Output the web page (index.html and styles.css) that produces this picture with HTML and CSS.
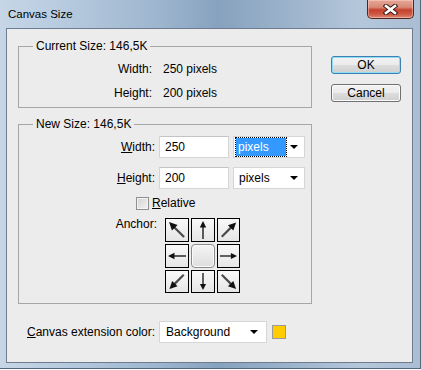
FILE: index.html
```html
<!DOCTYPE html>
<html>
<head>
<meta charset="utf-8">
<link rel="stylesheet" href="styles.css">
</head>
<body>
<div class="window">
  <div class="titlebar">
    <span class="title">Canvas Size</span>
    <div class="close">
      <svg width="15" height="11" viewBox="0 0 15 11">
        <path d="M3 2 L12 9 M12 2 L3 9" stroke="#3b1c16" stroke-width="4.6" stroke-linecap="square"/>
        <path d="M3 2 L12 9 M12 2 L3 9" stroke="#ffffff" stroke-width="2.6" stroke-linecap="square"/>
      </svg>
    </div>
  </div>
  <div class="client">
    <div class="main">
      <div class="groups">
        <fieldset class="group">
          <legend>Current Size: 146,5K</legend>
          <div class="info">
            <span class="lbl">Width:</span><span>250 pixels</span>
            <span class="lbl">Height:</span><span>200 pixels</span>
          </div>
        </fieldset>
        <fieldset class="group new">
          <legend>New Size: 146,5K</legend>
          <div class="fields">
            <span class="lbl"><u>W</u>idth:</span>
            <div class="input">250</div>
            <div class="select focused"><span class="sel-text">pixels</span><span class="arrow"></span></div>
            <span class="lbl"><u>H</u>eight:</span>
            <div class="input">200</div>
            <div class="select"><span class="sel-text">pixels</span><span class="arrow"></span></div>
          </div>
          <div class="check-row"><span class="checkbox"></span><span><u>R</u>elative</span></div>
          <div class="anchor-row">
            <span class="anchor-lbl">Anchor:</span>
            <div class="anchor-grid">
              <div class="cell"><svg viewBox="0 0 22 22"><g transform="translate(11 11) rotate(-135) scale(1.25) translate(-11 -11)"><line x1="3" y1="11" x2="15" y2="11" class="shaft"/><polygon points="20,11 13.5,7.8 13.5,14.2" class="head"/></g></svg></div>
              <div class="cell"><svg viewBox="0 0 22 22"><g transform="rotate(-90 11 11)"><line x1="2" y1="11" x2="15" y2="11" class="shaft"/><polygon points="20,11 13.5,7.8 13.5,14.2" class="head"/></g></svg></div>
              <div class="cell"><svg viewBox="0 0 22 22"><g transform="translate(11 11) rotate(-45) scale(1.25) translate(-11 -11)"><line x1="3" y1="11" x2="15" y2="11" class="shaft"/><polygon points="20,11 13.5,7.8 13.5,14.2" class="head"/></g></svg></div>
              <div class="cell"><svg viewBox="0 0 22 22"><g transform="rotate(180 11 11)"><line x1="2" y1="11" x2="15" y2="11" class="shaft"/><polygon points="20,11 13.5,7.8 13.5,14.2" class="head"/></g></svg></div>
              <div class="center"></div>
              <div class="cell"><svg viewBox="0 0 22 22"><g><line x1="2" y1="11" x2="15" y2="11" class="shaft"/><polygon points="20,11 13.5,7.8 13.5,14.2" class="head"/></g></svg></div>
              <div class="cell"><svg viewBox="0 0 22 22"><g transform="translate(11 11) rotate(135) scale(1.25) translate(-11 -11)"><line x1="3" y1="11" x2="15" y2="11" class="shaft"/><polygon points="20,11 13.5,7.8 13.5,14.2" class="head"/></g></svg></div>
              <div class="cell"><svg viewBox="0 0 22 22"><g transform="rotate(90 11 11)"><line x1="2" y1="11" x2="15" y2="11" class="shaft"/><polygon points="20,11 13.5,7.8 13.5,14.2" class="head"/></g></svg></div>
              <div class="cell"><svg viewBox="0 0 22 22"><g transform="translate(11 11) rotate(45) scale(1.25) translate(-11 -11)"><line x1="3" y1="11" x2="15" y2="11" class="shaft"/><polygon points="20,11 13.5,7.8 13.5,14.2" class="head"/></g></svg></div>
            </div>
          </div>
        </fieldset>
      </div>
      <div class="buttons">
        <div class="btn default">OK</div>
        <div class="btn">Cancel</div>
      </div>
    </div>
    <div class="ext-row">
      <span class="ext-lbl"><u>C</u>anvas extension color:</span>
      <div class="select ext"><span class="sel-text">Background</span><span class="arrow"></span></div>
      <span class="swatch"></span>
    </div>
  </div>
</div>
</body>
</html>
```

FILE: styles.css
```css
* { box-sizing: border-box; }
html, body { margin: 0; padding: 0; background: #ffffff; }
body {
  font-family: "Liberation Sans", Arial, sans-serif;
  font-size: 12px;
  color: #000;
}
.window {
  width: 421px;
  height: 369px;
  display: flex;
  flex-direction: column;
  padding: 0 7px 5px 6px;
  border-right: 1px solid #55677d;
  border-bottom: 1px solid #55677d;
  background: linear-gradient(90deg, #c6d6e7 0%, #b4c8dd 18%, #9db5ce 38%, #87a2bf 52%, #9bb2ca 68%, #b5c7db 86%, #aabdd3 100%);
}
.titlebar {
  height: 28px;
  display: flex;
  align-items: flex-start;
  flex: none;
}
.title {
  margin-left: 2px;
  margin-top: 6px;
  font-size: 11.5px;
  line-height: 16px;
  color: #000;
}
.close {
  margin-left: auto;
  margin-right: -1px;
  width: 47px;
  height: 19px;
  border: 1px solid #54251c;
  border-top: none;
  border-radius: 0 0 5px 5px;
  background: linear-gradient(180deg, #e6a696 0%, #d98a78 40%, #c5412c 55%, #cd5a45 80%, #db8c78 100%);
  box-shadow: inset 0 0 0 1px rgba(255,220,210,0.45);
  display: flex;
  align-items: center;
  justify-content: center;
}
.client {
  flex: 1;
  background: #ececec;
  border: 1px solid #6d7c8e;
  padding: 10px 11px 0 11px;
}
.main {
  display: flex;
}
.groups {
  width: 294px;
  display: flex;
  flex-direction: column;
  gap: 9px;
}
.group {
  margin: 0;
  padding: 0;
  border: 1px solid #a6a6a6;
  min-width: 0;
}
.group legend {
  margin-left: 14px;
  padding: 0 3px;
  line-height: 14px;
}
.info {
  display: grid;
  grid-template-columns: 133px auto;
  column-gap: 11px;
  grid-auto-rows: 24px;
  line-height: 24px;
  padding: 4px 0 2px;
}
.lbl { text-align: right; }
.new { padding-bottom: 10px; }
.fields {
  display: grid;
  grid-template-columns: 136px 70px 72px;
  column-gap: 4px;
  row-gap: 9px;
  align-items: center;
  padding-top: 5px;
}
.input {
  height: 22px;
  background: #fff;
  border: 1px solid #d6d6d6;
  border-top-color: #c4c4c4;
  padding-left: 5px;
  line-height: 20px;
}
.select {
  height: 22px;
  background: #fff;
  border: 1px solid #d6d6d6;
  display: flex;
  align-items: center;
  padding: 0 6px 0 5px;
}
.sel-text { flex: 1; line-height: 18px; }
.select.focused .sel-text {
  flex: none;
  width: 50px;
  margin-left: -3px;
  padding-left: 2px;
  background: #3399ff;
  color: #fff;
  outline: 1px dotted #000;
  outline-offset: 0;
}
.select.focused .arrow { margin-left: auto; }
.arrow {
  width: 0;
  height: 0;
  border-left: 4px solid transparent;
  border-right: 4px solid transparent;
  border-top: 4px solid #000;
  flex: none;
}
.check-row {
  margin-top: 6px;
  height: 16px;
  display: flex;
  align-items: center;
  gap: 3px;
  padding-left: 117px;
}
.checkbox {
  width: 13px;
  height: 13px;
  border: 1px solid #8e8f8f;
  background: linear-gradient(135deg, #d4d4d4 0%, #f2f2f2 100%);
  box-shadow: inset 0 0 0 1px #f4f4f4;
}
.anchor-row {
  margin-top: 7px;
  display: flex;
  align-items: flex-start;
}
.anchor-lbl {
  width: 138px;
  text-align: right;
  line-height: 14px;
  margin-top: -1px;
  margin-right: 8px;
}
.anchor-grid {
  display: grid;
  grid-template-columns: 24px 24px 23px;
  grid-template-rows: 24px 24px 23px;
  gap: 2px;
}
.cell {
  border: 1px solid #000;
  background: linear-gradient(180deg, #f9f9f9 0%, #e6e6e6 100%);
}
.cell svg { display: block; width: 100%; height: 100%; }
.shaft { stroke: #4a4a4a; stroke-width: 1.8; }
.head { fill: #111; }
.center {
  border: 1px solid #8a8a8a;
  border-radius: 4px;
  background: linear-gradient(180deg, #f4f4f4 0%, #dedede 100%);
  box-shadow: inset 0 0 0 1px #fafafa;
}
.buttons {
  margin-left: 19px;
  width: 70px;
  padding-top: 17px;
  display: flex;
  flex-direction: column;
  gap: 10px;
}
.btn {
  height: 18px;
  border: 1px solid #707070;
  border-radius: 3px;
  background: linear-gradient(180deg, #f2f2f2 0%, #ebebeb 49%, #dddddd 51%, #cfcfcf 100%);
  box-shadow: inset 0 0 0 1px #fbfbfb;
  text-align: center;
  line-height: 16px;
}
.btn.default {
  border-color: #3c7fb1;
  box-shadow: inset 0 0 0 1px #8fdcf6;
}
.ext-row {
  margin-top: 17px;
  padding-left: 9px;
  display: flex;
  align-items: center;
  gap: 4px;
}
.ext-lbl {
  white-space: nowrap;
}
.select.ext { width: 108px; padding-left: 6px; padding-right: 8px; }
.swatch {
  width: 14px;
  height: 14px;
  margin-left: 1px;
  background: #ffcc00;
  border: 1px solid #9a9a9a;
}
```
